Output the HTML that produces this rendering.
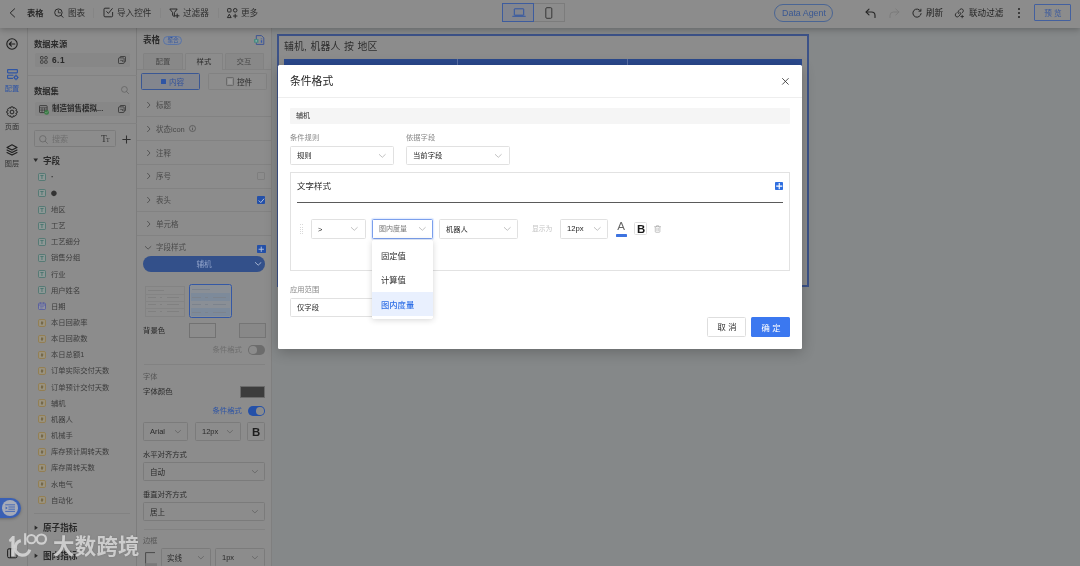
<!DOCTYPE html>
<html lang="zh-CN">
<head>
<meta charset="utf-8">
<title>条件格式</title>
<style>
html,body{margin:0;padding:0;}
body{width:1080px;height:566px;overflow:hidden;position:relative;background:#858889;
 font-family:"Liberation Sans","Noto Sans CJK SC",sans-serif;-webkit-font-smoothing:antialiased;}
#root{position:absolute;left:0;top:0;width:1080px;height:566px;overflow:hidden;}
.t{position:absolute;white-space:nowrap;color:#2b2b2b;will-change:transform;}
svg{display:block;overflow:visible;}
</style>
</head>
<body>
<div id="root">

<div style="position:absolute;left:0px;top:0px;width:1080px;height:566px;background:#858889;"></div>
<div style="position:absolute;left:0px;top:27px;width:27px;height:539px;background:#8c8c8c;"></div>
<div style="position:absolute;left:27px;top:27px;width:109.5px;height:539px;background:#8c8c8c;border-left:0.8px solid #7f7f7f;box-sizing:border-box;"></div>
<div style="position:absolute;left:136px;top:27px;width:135.5px;height:539px;background:#8c8c8c;border-left:0.8px solid #7d7d7d;border-right:0.8px solid #7f7f7f;box-sizing:border-box;"></div>
<svg style="position:absolute;left:6.3px;top:37.5px;" width="12" height="12" viewBox="0 0 12 12" fill="none"><circle cx="6" cy="6" r="5.2" stroke="#1f1f1f" stroke-width="1.1"/><path d="M8.8 6 H3.4 M5.4 3.9 L3.3 6 L5.4 8.1" stroke="#1f1f1f" stroke-width="1.1" stroke-linecap="round" stroke-linejoin="round"/></svg>
<svg style="position:absolute;left:6.5px;top:69px;" width="12" height="11" viewBox="0 0 12 11" fill="none"><rect x="0.6" y="0.6" width="9.8" height="3.2" rx="0.5" stroke="#2f55a4" stroke-width="1.15"/><path d="M6 6.2 H1.1 Q0.6 6.2 0.6 6.7 V8.9 Q0.6 9.4 1.1 9.4 H5.6" stroke="#2f55a4" stroke-width="1.15" stroke-linecap="round"/><circle cx="9" cy="8.4" r="1.6" stroke="#2f55a4" stroke-width="1.15"/><path d="M9 5.9 V6.6 M9 10.2 V10.9 M6.7 8.4 H7.3 M10.7 8.4 H11.3" stroke="#2f55a4" stroke-width="0.9" stroke-linecap="round"/></svg>
<div class="t" id="t0" style="top:84px;font-size:7.2px;line-height:10px;left:-87.7px;width:200px;text-align:center;color:#2f55a4;">配置</div>
<svg style="position:absolute;left:6.2px;top:105.5px;" width="12" height="12" viewBox="0 0 12 12" fill="none"><path d="M4.9 0.9 H7.1 L7.6 2.3 L8.9 1.7 L10.5 3.3 L9.8 4.5 L11.1 5 V7 L9.8 7.5 L10.5 8.7 L8.9 10.3 L7.6 9.7 L7.1 11.1 H4.9 L4.4 9.7 L3.1 10.3 L1.5 8.7 L2.2 7.5 L0.9 7 V5 L2.2 4.5 L1.5 3.3 L3.1 1.7 L4.4 2.3 Z" stroke="#1f1f1f" stroke-width="0.95" stroke-linejoin="round"/><circle cx="6" cy="6" r="1.9" stroke="#1f1f1f" stroke-width="0.95"/></svg>
<div class="t" id="t1" style="top:122px;font-size:7.2px;line-height:10px;left:-87.7px;width:200px;text-align:center;color:#333;">页面</div>
<svg style="position:absolute;left:6.2px;top:143.5px;" width="12" height="12" viewBox="0 0 12 12" fill="none"><path d="M6 0.8 L11 3.4 L6 6 L1 3.4 Z" stroke="#1f1f1f" stroke-width="1.1" stroke-linejoin="round"/><path d="M1 6 L6 8.6 L11 6" stroke="#1f1f1f" stroke-width="1.1" stroke-linejoin="round" stroke-linecap="round"/><path d="M1 8.5 L6 11.1 L11 8.5" stroke="#1f1f1f" stroke-width="1.1" stroke-linejoin="round" stroke-linecap="round"/></svg>
<div class="t" id="t2" style="top:159px;font-size:7.2px;line-height:10px;left:-87.7px;width:200px;text-align:center;color:#333;">图层</div>
<div style="position:absolute;left:-10px;top:497.8px;width:31px;height:20.4px;background:#3a60b4;border-radius:10.2px;box-shadow:0 1px 3px rgba(0,0,0,0.25);"></div>
<div style="position:absolute;left:2px;top:499.8px;width:16.4px;height:16.4px;background:#a6abb8;border-radius:50%;"></div>
<svg style="position:absolute;left:5px;top:503.8px;" width="11" height="9" viewBox="0 0 11 9" fill="none"><path d="M0.6 0.8 H9.6 M3.8 3 H9.6 M3.8 5.2 H9.6 M0.6 7.4 H9.6" stroke="#3a60b4" stroke-width="0.85" stroke-linecap="round"/><path d="M0.6 2.6 L2.6 4.1 L0.6 5.6 Z" fill="#3a60b4"/></svg>
<svg style="position:absolute;left:7px;top:547.5px;" width="11" height="11" viewBox="0 0 11 11" fill="none"><rect x="0.6" y="0.8" width="9.4" height="9" rx="1.4" stroke="#1f1f1f" stroke-width="1"/><path d="M3.6 0.8 V9.8" stroke="#1f1f1f" stroke-width="0.9"/></svg>
<div class="t" id="t3" style="top:38px;font-size:8.3px;line-height:12px;left:34px;color:#2a2a2a;font-weight:700;">数据来源</div>
<div style="position:absolute;left:34.5px;top:52.6px;width:95.5px;height:14.6px;background:#878787;border-radius:1.5px;"></div>
<svg style="position:absolute;left:39.5px;top:56px;" width="8" height="8" viewBox="0 0 8 8" fill="none"><rect x="0.5" y="0.5" width="2.6" height="2.6" rx="0.5" stroke="#333" stroke-width="0.8"/><circle cx="6" cy="1.8" r="1.4" stroke="#333" stroke-width="0.8"/><rect x="0.5" y="4.7" width="2.6" height="2.6" rx="0.5" stroke="#333" stroke-width="0.8"/><rect x="4.6" y="4.7" width="2.6" height="2.6" rx="0.5" stroke="#333" stroke-width="0.8"/></svg>
<div class="t" id="t4" style="top:54px;font-size:8.3px;line-height:12px;left:52px;color:#2a2a2a;font-weight:700;letter-spacing:0.5px;">6.1</div>
<svg style="position:absolute;left:118px;top:56px;" width="8" height="8" viewBox="0 0 8 8" fill="none"><rect x="0.5" y="1.9" width="5.6" height="5.6" rx="0.7" stroke="#333" stroke-width="0.8"/><path d="M2.1 1.9 V1.1 Q2.1 0.5 2.7 0.5 H6.9 Q7.5 0.5 7.5 1.1 V5.3 Q7.5 5.9 6.9 5.9 H6.1" stroke="#333" stroke-width="0.8"/><path d="M2.2 4.3 H4.6 V6" stroke="#333" stroke-width="0.7"/></svg>
<div style="position:absolute;left:27.5px;top:75px;width:109px;height:1px;background:#828282;"></div>
<div class="t" id="t5" style="top:85px;font-size:8.3px;line-height:12px;left:34px;color:#2a2a2a;font-weight:700;">数据集</div>
<svg style="position:absolute;left:120.5px;top:86px;" width="8" height="8" viewBox="0 0 8 8" fill="none"><circle cx="3.4" cy="3.4" r="2.9" stroke="#666" stroke-width="0.85"/><path d="M5.5 5.5 L7.6 7.6" stroke="#666" stroke-width="0.85" stroke-linecap="round"/></svg>
<div style="position:absolute;left:34.5px;top:101.5px;width:95.5px;height:14px;background:#878787;border-radius:1.5px;"></div>
<svg style="position:absolute;left:38.9px;top:104.7px;" width="10" height="10" viewBox="0 0 10 10" fill="none"><rect x="0.5" y="0.6" width="7.6" height="7" rx="0.6" stroke="#333" stroke-width="0.85"/><path d="M0.5 2.8 H8.1 M0.5 5.1 H8.1 M3 2.8 V7.6 M5.6 2.8 V7.6" stroke="#333" stroke-width="0.65"/><circle cx="7.6" cy="7.4" r="2.4" fill="#3a7a45"/><path d="M6.5 7.4 L7.3 8.2 L8.7 6.7" stroke="#8fb596" stroke-width="0.6" stroke-linecap="round" stroke-linejoin="round"/></svg>
<div class="t" id="t6" style="top:103px;font-size:7.5px;line-height:12px;left:52px;color:#2a2a2a;font-weight:700;">制造销售模拟...</div>
<svg style="position:absolute;left:118px;top:104.5px;" width="8" height="8" viewBox="0 0 8 8" fill="none"><rect x="0.5" y="1.9" width="5.6" height="5.6" rx="0.7" stroke="#333" stroke-width="0.8"/><path d="M2.1 1.9 V1.1 Q2.1 0.5 2.7 0.5 H6.9 Q7.5 0.5 7.5 1.1 V5.3 Q7.5 5.9 6.9 5.9 H6.1" stroke="#333" stroke-width="0.8"/><path d="M2.2 4.3 H4.6 V6" stroke="#333" stroke-width="0.7"/></svg>
<div style="position:absolute;left:27.5px;top:123px;width:109px;height:1px;background:#828282;"></div>
<div style="position:absolute;left:34.4px;top:130.4px;width:82px;height:17px;box-sizing:border-box;border:0.9px solid #7c7c7c;border-radius:1.5px;background:#8c8c8c;"></div>
<svg style="position:absolute;left:39px;top:134.5px;" width="9" height="9" viewBox="0 0 9 9" fill="none"><circle cx="3.8" cy="3.8" r="3.2" stroke="#6a6a6a" stroke-width="0.9"/><path d="M6.2 6.2 L8.4 8.4" stroke="#6a6a6a" stroke-width="0.9" stroke-linecap="round"/></svg>
<div class="t" id="t7" style="top:134px;font-size:8.1px;line-height:12px;left:51.6px;color:#6e6e6e;">搜索</div>
<div class="t" id="t8" style="top:133px;font-size:9.5px;line-height:12px;left:101px;color:#333;font-family:&quot;Liberation Serif&quot;,serif;">T</div>
<div class="t" id="t9" style="top:134px;font-size:6px;line-height:12px;left:105.8px;color:#333;font-family:&quot;Liberation Serif&quot;,serif;">T</div>
<svg style="position:absolute;left:122px;top:134.8px;" width="9" height="9" viewBox="0 0 9 9" fill="none"><path d="M4.5 0.4 V8.6 M0.4 4.5 H8.6" stroke="#303030" stroke-width="1.05"/></svg>
<svg style="position:absolute;left:33.3px;top:157.5px;" width="6" height="5" viewBox="0 0 6 5" fill="none"><path d="M0.4 0.6 H5 L2.7 3.9 Z" fill="#2a2a2a"/></svg>
<div class="t" id="t10" style="top:155px;font-size:8.6px;line-height:12px;left:43px;color:#2a2a2a;font-weight:700;">字段</div>
<svg style="position:absolute;left:38px;top:173.2px;" width="8" height="8" viewBox="0 0 8 8" fill="none"><rect x="0.5" y="0.5" width="7" height="7" rx="1" stroke="#43716b" stroke-width="0.75" fill="#8d9795"/><text x="4" y="6.1" font-size="5.6" font-weight="700" text-anchor="middle" font-family="Liberation Sans, sans-serif" fill="#43716b">T</text></svg>
<div class="t" id="t11" style="top:171px;font-size:8.3px;line-height:12px;left:51px;color:#333;font-weight:700;">·</div>
<svg style="position:absolute;left:38px;top:189.35px;" width="8" height="8" viewBox="0 0 8 8" fill="none"><rect x="0.5" y="0.5" width="7" height="7" rx="1" stroke="#43716b" stroke-width="0.75" fill="#8d9795"/><text x="4" y="6.1" font-size="5.6" font-weight="700" text-anchor="middle" font-family="Liberation Sans, sans-serif" fill="#43716b">T</text></svg>
<div class="t" id="t12" style="top:187px;font-size:13px;line-height:12px;left:49.8px;color:#333;">●</div>
<svg style="position:absolute;left:38px;top:205.5px;" width="8" height="8" viewBox="0 0 8 8" fill="none"><rect x="0.5" y="0.5" width="7" height="7" rx="1" stroke="#43716b" stroke-width="0.75" fill="#8d9795"/><text x="4" y="6.1" font-size="5.6" font-weight="700" text-anchor="middle" font-family="Liberation Sans, sans-serif" fill="#43716b">T</text></svg>
<div class="t" id="t13" style="top:204px;font-size:7.3px;line-height:12px;left:51px;color:#3c3c3c;">地区</div>
<svg style="position:absolute;left:38px;top:221.64999999999998px;" width="8" height="8" viewBox="0 0 8 8" fill="none"><rect x="0.5" y="0.5" width="7" height="7" rx="1" stroke="#43716b" stroke-width="0.75" fill="#8d9795"/><text x="4" y="6.1" font-size="5.6" font-weight="700" text-anchor="middle" font-family="Liberation Sans, sans-serif" fill="#43716b">T</text></svg>
<div class="t" id="t14" style="top:220px;font-size:7.3px;line-height:12px;left:51px;color:#3c3c3c;">工艺</div>
<svg style="position:absolute;left:38px;top:237.79999999999998px;" width="8" height="8" viewBox="0 0 8 8" fill="none"><rect x="0.5" y="0.5" width="7" height="7" rx="1" stroke="#43716b" stroke-width="0.75" fill="#8d9795"/><text x="4" y="6.1" font-size="5.6" font-weight="700" text-anchor="middle" font-family="Liberation Sans, sans-serif" fill="#43716b">T</text></svg>
<div class="t" id="t15" style="top:236px;font-size:7.3px;line-height:12px;left:51px;color:#3c3c3c;">工艺细分</div>
<svg style="position:absolute;left:38px;top:253.95px;" width="8" height="8" viewBox="0 0 8 8" fill="none"><rect x="0.5" y="0.5" width="7" height="7" rx="1" stroke="#43716b" stroke-width="0.75" fill="#8d9795"/><text x="4" y="6.1" font-size="5.6" font-weight="700" text-anchor="middle" font-family="Liberation Sans, sans-serif" fill="#43716b">T</text></svg>
<div class="t" id="t16" style="top:252px;font-size:7.3px;line-height:12px;left:51px;color:#3c3c3c;">销售分组</div>
<svg style="position:absolute;left:38px;top:270.09999999999997px;" width="8" height="8" viewBox="0 0 8 8" fill="none"><rect x="0.5" y="0.5" width="7" height="7" rx="1" stroke="#43716b" stroke-width="0.75" fill="#8d9795"/><text x="4" y="6.1" font-size="5.6" font-weight="700" text-anchor="middle" font-family="Liberation Sans, sans-serif" fill="#43716b">T</text></svg>
<div class="t" id="t17" style="top:269px;font-size:7.3px;line-height:12px;left:51px;color:#3c3c3c;">行业</div>
<svg style="position:absolute;left:38px;top:286.25px;" width="8" height="8" viewBox="0 0 8 8" fill="none"><rect x="0.5" y="0.5" width="7" height="7" rx="1" stroke="#43716b" stroke-width="0.75" fill="#8d9795"/><text x="4" y="6.1" font-size="5.6" font-weight="700" text-anchor="middle" font-family="Liberation Sans, sans-serif" fill="#43716b">T</text></svg>
<div class="t" id="t18" style="top:285px;font-size:7.3px;line-height:12px;left:51px;color:#3c3c3c;">用户姓名</div>
<svg style="position:absolute;left:38px;top:302.4px;" width="8" height="8" viewBox="0 0 8 8" fill="none"><rect x="0.5" y="1.1" width="7" height="6.4" rx="1" stroke="#4d55a0" stroke-width="0.75" fill="#9092a0"/><path d="M0.5 3 H7.5 M2.4 0.3 V1.8 M5.6 0.3 V1.8" stroke="#4d55a0" stroke-width="0.7"/><path d="M2.2 4.6 H5.8 M2.2 6 H4.6" stroke="#4d55a0" stroke-width="0.5"/></svg>
<div class="t" id="t19" style="top:301px;font-size:7.3px;line-height:12px;left:51px;color:#3c3c3c;">日期</div>
<svg style="position:absolute;left:38px;top:318.54999999999995px;" width="8" height="8" viewBox="0 0 8 8" fill="none"><rect x="0.6" y="0.6" width="6.8" height="6.8" rx="1" stroke="#94783f" stroke-width="0.8" fill="#9b9584"/><text x="4" y="5.7" font-size="4.8" font-weight="700" text-anchor="middle" font-family="Liberation Sans, sans-serif" fill="#665630">#</text></svg>
<div class="t" id="t20" style="top:317px;font-size:7.3px;line-height:12px;left:51px;color:#3c3c3c;">本日回款率</div>
<svg style="position:absolute;left:38px;top:334.7px;" width="8" height="8" viewBox="0 0 8 8" fill="none"><rect x="0.6" y="0.6" width="6.8" height="6.8" rx="1" stroke="#94783f" stroke-width="0.8" fill="#9b9584"/><text x="4" y="5.7" font-size="4.8" font-weight="700" text-anchor="middle" font-family="Liberation Sans, sans-serif" fill="#665630">#</text></svg>
<div class="t" id="t21" style="top:333px;font-size:7.3px;line-height:12px;left:51px;color:#3c3c3c;">本日回款数</div>
<svg style="position:absolute;left:38px;top:350.84999999999997px;" width="8" height="8" viewBox="0 0 8 8" fill="none"><rect x="0.6" y="0.6" width="6.8" height="6.8" rx="1" stroke="#94783f" stroke-width="0.8" fill="#9b9584"/><text x="4" y="5.7" font-size="4.8" font-weight="700" text-anchor="middle" font-family="Liberation Sans, sans-serif" fill="#665630">#</text></svg>
<div class="t" id="t22" style="top:349px;font-size:7.3px;line-height:12px;left:51px;color:#3c3c3c;">本日总额1</div>
<svg style="position:absolute;left:38px;top:367.0px;" width="8" height="8" viewBox="0 0 8 8" fill="none"><rect x="0.6" y="0.6" width="6.8" height="6.8" rx="1" stroke="#94783f" stroke-width="0.8" fill="#9b9584"/><text x="4" y="5.7" font-size="4.8" font-weight="700" text-anchor="middle" font-family="Liberation Sans, sans-serif" fill="#665630">#</text></svg>
<div class="t" id="t23" style="top:365px;font-size:7.3px;line-height:12px;left:51px;color:#3c3c3c;">订单实际交付天数</div>
<svg style="position:absolute;left:38px;top:383.15px;" width="8" height="8" viewBox="0 0 8 8" fill="none"><rect x="0.6" y="0.6" width="6.8" height="6.8" rx="1" stroke="#94783f" stroke-width="0.8" fill="#9b9584"/><text x="4" y="5.7" font-size="4.8" font-weight="700" text-anchor="middle" font-family="Liberation Sans, sans-serif" fill="#665630">#</text></svg>
<div class="t" id="t24" style="top:382px;font-size:7.3px;line-height:12px;left:51px;color:#3c3c3c;">订单预计交付天数</div>
<svg style="position:absolute;left:38px;top:399.29999999999995px;" width="8" height="8" viewBox="0 0 8 8" fill="none"><rect x="0.6" y="0.6" width="6.8" height="6.8" rx="1" stroke="#94783f" stroke-width="0.8" fill="#9b9584"/><text x="4" y="5.7" font-size="4.8" font-weight="700" text-anchor="middle" font-family="Liberation Sans, sans-serif" fill="#665630">#</text></svg>
<div class="t" id="t25" style="top:398px;font-size:7.3px;line-height:12px;left:51px;color:#3c3c3c;">辅机</div>
<svg style="position:absolute;left:38px;top:415.44999999999993px;" width="8" height="8" viewBox="0 0 8 8" fill="none"><rect x="0.6" y="0.6" width="6.8" height="6.8" rx="1" stroke="#94783f" stroke-width="0.8" fill="#9b9584"/><text x="4" y="5.7" font-size="4.8" font-weight="700" text-anchor="middle" font-family="Liberation Sans, sans-serif" fill="#665630">#</text></svg>
<div class="t" id="t26" style="top:414px;font-size:7.3px;line-height:12px;left:51px;color:#3c3c3c;">机器人</div>
<svg style="position:absolute;left:38px;top:431.59999999999997px;" width="8" height="8" viewBox="0 0 8 8" fill="none"><rect x="0.6" y="0.6" width="6.8" height="6.8" rx="1" stroke="#94783f" stroke-width="0.8" fill="#9b9584"/><text x="4" y="5.7" font-size="4.8" font-weight="700" text-anchor="middle" font-family="Liberation Sans, sans-serif" fill="#665630">#</text></svg>
<div class="t" id="t27" style="top:430px;font-size:7.3px;line-height:12px;left:51px;color:#3c3c3c;">机械手</div>
<svg style="position:absolute;left:38px;top:447.74999999999994px;" width="8" height="8" viewBox="0 0 8 8" fill="none"><rect x="0.6" y="0.6" width="6.8" height="6.8" rx="1" stroke="#94783f" stroke-width="0.8" fill="#9b9584"/><text x="4" y="5.7" font-size="4.8" font-weight="700" text-anchor="middle" font-family="Liberation Sans, sans-serif" fill="#665630">#</text></svg>
<div class="t" id="t28" style="top:446px;font-size:7.3px;line-height:12px;left:51px;color:#3c3c3c;">库存预计周转天数</div>
<svg style="position:absolute;left:38px;top:463.9px;" width="8" height="8" viewBox="0 0 8 8" fill="none"><rect x="0.6" y="0.6" width="6.8" height="6.8" rx="1" stroke="#94783f" stroke-width="0.8" fill="#9b9584"/><text x="4" y="5.7" font-size="4.8" font-weight="700" text-anchor="middle" font-family="Liberation Sans, sans-serif" fill="#665630">#</text></svg>
<div class="t" id="t29" style="top:462px;font-size:7.3px;line-height:12px;left:51px;color:#3c3c3c;">库存周转天数</div>
<svg style="position:absolute;left:38px;top:480.04999999999995px;" width="8" height="8" viewBox="0 0 8 8" fill="none"><rect x="0.6" y="0.6" width="6.8" height="6.8" rx="1" stroke="#94783f" stroke-width="0.8" fill="#9b9584"/><text x="4" y="5.7" font-size="4.8" font-weight="700" text-anchor="middle" font-family="Liberation Sans, sans-serif" fill="#665630">#</text></svg>
<div class="t" id="t30" style="top:479px;font-size:7.3px;line-height:12px;left:51px;color:#3c3c3c;">水电气</div>
<svg style="position:absolute;left:38px;top:496.2px;" width="8" height="8" viewBox="0 0 8 8" fill="none"><rect x="0.6" y="0.6" width="6.8" height="6.8" rx="1" stroke="#94783f" stroke-width="0.8" fill="#9b9584"/><text x="4" y="5.7" font-size="4.8" font-weight="700" text-anchor="middle" font-family="Liberation Sans, sans-serif" fill="#665630">#</text></svg>
<div class="t" id="t31" style="top:495px;font-size:7.3px;line-height:12px;left:51px;color:#3c3c3c;">自动化</div>
<div style="position:absolute;left:34px;top:513px;width:96px;height:1px;background:#828282;"></div>
<svg style="position:absolute;left:33.8px;top:524.8px;" width="5" height="6" viewBox="0 0 5 6" fill="none"><path d="M0.6 0.4 V5 L3.9 2.7 Z" fill="#2a2a2a"/></svg>
<div class="t" id="t32" style="top:522px;font-size:8.6px;line-height:12px;left:43px;color:#2a2a2a;font-weight:700;">原子指标</div>
<svg style="position:absolute;left:33.8px;top:552.8px;" width="5" height="6" viewBox="0 0 5 6" fill="none"><path d="M0.6 0.4 V5 L3.9 2.7 Z" fill="#2a2a2a"/></svg>
<div class="t" id="t33" style="top:550px;font-size:8.6px;line-height:12px;left:43px;color:#2a2a2a;font-weight:700;">图内指标</div>
<div class="t" id="t34" style="top:34px;font-size:8.6px;line-height:12px;left:143.4px;color:#2a2a2a;font-weight:700;">表格</div>
<div style="position:absolute;left:163px;top:36px;width:19.2px;height:9.2px;box-sizing:border-box;border:0.7px solid #5a74a6;border-radius:4.6px;background:#858b98;"></div>
<div class="t" id="t35" style="top:36px;font-size:5.6px;line-height:8px;left:72.6px;width:200px;text-align:center;color:#34569c;">聚合</div>
<svg style="position:absolute;left:254px;top:35px;" width="11" height="11" viewBox="0 0 11 11" fill="none"><path d="M2.3 4 V0.6 H7.5 L9.8 2.9 V9.4 H2.3 V7.7" stroke="#3a5296" stroke-width="0.95" stroke-linejoin="round"/><rect x="0" y="4" width="4.5" height="3.8" rx="0.5" fill="#4a8a82"/><rect x="1.5" y="5.1" width="1.5" height="1.6" fill="#86b3ab"/><path d="M7.5 3.4 V4.3 M7.5 5.2 V7.7" stroke="#3558a8" stroke-width="1.4"/></svg>
<div style="position:absolute;left:137px;top:69px;width:134px;height:1px;background:#828282;"></div>
<div style="position:absolute;left:143.3px;top:52.6px;width:39.6px;height:16.6px;box-sizing:border-box;border:0.8px solid #828282;border-bottom:none;border-radius:1.5px 1.5px 0 0;background:#888888;"></div>
<div class="t" id="t36" style="top:57px;font-size:7.4px;line-height:10px;left:63.099999999999994px;width:200px;text-align:center;color:#4a4a4a;">配置</div>
<div style="position:absolute;left:184.5px;top:52.6px;width:38.6px;height:17.3px;box-sizing:border-box;border:0.8px solid #828282;border-bottom:none;border-radius:1.5px 1.5px 0 0;background:#8c8c8c;"></div>
<div class="t" id="t37" style="top:57px;font-size:7.4px;line-height:10px;left:103.80000000000001px;width:200px;text-align:center;color:#2a2a2a;">样式</div>
<div style="position:absolute;left:225px;top:52.6px;width:38.8px;height:16.6px;box-sizing:border-box;border:0.8px solid #828282;border-bottom:none;border-radius:1.5px 1.5px 0 0;background:#888888;"></div>
<div class="t" id="t38" style="top:57px;font-size:7.4px;line-height:10px;left:144.4px;width:200px;text-align:center;color:#4a4a4a;">交互</div>
<div style="position:absolute;left:141.3px;top:73.2px;width:58.5px;height:17px;box-sizing:border-box;border:1px solid #3a5794;border-radius:1.5px;background:#83868e;"></div>
<div style="position:absolute;left:161px;top:79.3px;width:4.6px;height:4.6px;background:#2f55a4;border-radius:0.6px;"></div>
<div class="t" id="t39" style="top:77px;font-size:7.6px;line-height:12px;left:169px;color:#34539a;">内容</div>
<div style="position:absolute;left:208px;top:73.2px;width:59px;height:17px;box-sizing:border-box;border:0.8px solid #828282;border-radius:1.5px;background:#8c8c8c;"></div>
<div style="position:absolute;left:226px;top:77.4px;width:8px;height:8.2px;box-sizing:border-box;border:0.8px solid #6a6a6a;border-radius:1.2px;background:#8c8c8c;"></div>
<div style="position:absolute;left:227.7px;top:79.1px;width:4.6px;height:4.8px;background:#9a9a9a;border-radius:0.5px;"></div>
<div class="t" id="t40" style="top:77px;font-size:7.6px;line-height:12px;left:236.6px;color:#2a2a2a;">控件</div>
<svg style="position:absolute;left:146.5px;top:102px;" width="4" height="6" viewBox="0 0 4 6" fill="none"><path d="M0.5 0.3 L3 3 L0.5 5.7" stroke="#454545" stroke-width="0.75" stroke-linecap="round" stroke-linejoin="round"/></svg>
<div class="t" id="t41" style="top:100px;font-size:7.5px;line-height:12px;left:156.3px;color:#4a4a4a;">标题</div>
<div style="position:absolute;left:137px;top:116px;width:134px;height:1px;background:#828282;"></div>
<svg style="position:absolute;left:146.5px;top:125.80000000000001px;" width="4" height="6" viewBox="0 0 4 6" fill="none"><path d="M0.5 0.3 L3 3 L0.5 5.7" stroke="#454545" stroke-width="0.75" stroke-linecap="round" stroke-linejoin="round"/></svg>
<div class="t" id="t42" style="top:124px;font-size:7.5px;line-height:12px;left:156.3px;color:#4a4a4a;">状态icon</div>
<div style="position:absolute;left:137px;top:140px;width:134px;height:1px;background:#828282;"></div>
<svg style="position:absolute;left:146.5px;top:149.6px;" width="4" height="6" viewBox="0 0 4 6" fill="none"><path d="M0.5 0.3 L3 3 L0.5 5.7" stroke="#454545" stroke-width="0.75" stroke-linecap="round" stroke-linejoin="round"/></svg>
<div class="t" id="t43" style="top:148px;font-size:7.5px;line-height:12px;left:156.3px;color:#4a4a4a;">注释</div>
<div style="position:absolute;left:137px;top:164px;width:134px;height:1px;background:#828282;"></div>
<svg style="position:absolute;left:146.5px;top:173.4px;" width="4" height="6" viewBox="0 0 4 6" fill="none"><path d="M0.5 0.3 L3 3 L0.5 5.7" stroke="#454545" stroke-width="0.75" stroke-linecap="round" stroke-linejoin="round"/></svg>
<div class="t" id="t44" style="top:171px;font-size:7.5px;line-height:12px;left:156.3px;color:#4a4a4a;">序号</div>
<div style="position:absolute;left:137px;top:188px;width:134px;height:1px;background:#828282;"></div>
<svg style="position:absolute;left:146.5px;top:197.2px;" width="4" height="6" viewBox="0 0 4 6" fill="none"><path d="M0.5 0.3 L3 3 L0.5 5.7" stroke="#454545" stroke-width="0.75" stroke-linecap="round" stroke-linejoin="round"/></svg>
<div class="t" id="t45" style="top:195px;font-size:7.5px;line-height:12px;left:156.3px;color:#4a4a4a;">表头</div>
<div style="position:absolute;left:137px;top:211px;width:134px;height:1px;background:#828282;"></div>
<svg style="position:absolute;left:146.5px;top:221px;" width="4" height="6" viewBox="0 0 4 6" fill="none"><path d="M0.5 0.3 L3 3 L0.5 5.7" stroke="#454545" stroke-width="0.75" stroke-linecap="round" stroke-linejoin="round"/></svg>
<div class="t" id="t46" style="top:219px;font-size:7.5px;line-height:12px;left:156.3px;color:#4a4a4a;">单元格</div>
<div style="position:absolute;left:137px;top:235px;width:134px;height:1px;background:#828282;"></div>
<svg style="position:absolute;left:189px;top:125.3px;" width="7" height="7" viewBox="0 0 7 7" fill="none"><circle cx="3.5" cy="3.5" r="3.05" stroke="#4a4a4a" stroke-width="0.65"/><path d="M3.5 3.1 V5.2" stroke="#4a4a4a" stroke-width="0.75"/><circle cx="3.5" cy="2" r="0.45" fill="#4a4a4a"/></svg>
<div style="position:absolute;left:256.7px;top:172.3px;width:8.2px;height:8.2px;box-sizing:border-box;border:0.8px solid #7e7e7e;border-radius:1px;background:#8c8c8c;"></div>
<div style="position:absolute;left:256.7px;top:196.1px;width:8.4px;height:8.4px;background:#2450a8;border-radius:1px;"></div>
<svg style="position:absolute;left:257.6px;top:197.6px;" width="7" height="6" viewBox="0 0 7 6" fill="none"><path d="M1 2.8 L2.8 4.6 L5.8 1" stroke="#b9c4dc" stroke-width="0.95" stroke-linecap="round" stroke-linejoin="round"/></svg>
<svg style="position:absolute;left:144.70000000000002px;top:245.74999999999997px;" width="6.2" height="4.1" viewBox="0 0 6.2 4.1" fill="none"><path d="M0.3 0.5 L3.1 3.1 L5.9 0.5" stroke="#454545" stroke-width="0.75" stroke-linecap="round" stroke-linejoin="round"/></svg>
<div class="t" id="t47" style="top:242px;font-size:7.5px;line-height:12px;left:156.3px;color:#4a4a4a;">字段样式</div>
<div style="position:absolute;left:257px;top:244.5px;width:8.5px;height:8.5px;background:#2450a8;border-radius:0.8px;"></div>
<svg style="position:absolute;left:257px;top:244.5px;" width="8.5" height="8.5" viewBox="0 0 8.5 8.5" fill="none"><path d="M4.25 1.6 V6.9 M1.6 4.25 H6.9" stroke="#b9c4dc" stroke-width="0.9"/></svg>
<div style="position:absolute;left:143.3px;top:256px;width:122.2px;height:16px;background:#33508a;border-radius:8px;"></div>
<div class="t" id="t48" style="top:260px;font-size:7.6px;line-height:10px;left:104.4px;width:200px;text-align:center;color:#93a4cb;">辅机</div>
<svg style="position:absolute;left:255.10000000000002px;top:262.29999999999995px;" width="6.4" height="4.2" viewBox="0 0 6.4 4.2" fill="none"><path d="M0.3 0.5 L3.2 3.2 L6.1000000000000005 0.5" stroke="#b9c4dc" stroke-width="0.85" stroke-linecap="round" stroke-linejoin="round"/></svg>
<div style="position:absolute;left:144.6px;top:285.6px;width:40.2px;height:31.2px;box-sizing:border-box;border:0.6px solid #838383;background:#8c8c8c;"></div>
<div style="position:absolute;left:147.6px;top:290px;width:16.740000000000002px;height:1px;background:#808080;"></div>
<div style="position:absolute;left:145.2px;top:294px;width:39.0px;height:1px;background:#848484;"></div>
<div style="position:absolute;left:147.6px;top:297px;width:8.184000000000001px;height:1px;background:#808080;"></div>
<div style="position:absolute;left:159.504px;top:297px;width:2.9760000000000004px;height:1px;background:#808080;"></div>
<div style="position:absolute;left:166.944px;top:297px;width:12.276000000000002px;height:1px;background:#808080;"></div>
<div style="position:absolute;left:145.2px;top:301px;width:39.0px;height:1px;background:#848484;"></div>
<div style="position:absolute;left:147.6px;top:304px;width:8.184000000000001px;height:1px;background:#808080;"></div>
<div style="position:absolute;left:159.504px;top:304px;width:2.9760000000000004px;height:1px;background:#808080;"></div>
<div style="position:absolute;left:166.944px;top:304px;width:12.276000000000002px;height:1px;background:#808080;"></div>
<div style="position:absolute;left:145.2px;top:308px;width:39.0px;height:1px;background:#848484;"></div>
<div style="position:absolute;left:147.6px;top:311px;width:8.184000000000001px;height:1px;background:#808080;"></div>
<div style="position:absolute;left:159.504px;top:311px;width:2.9760000000000004px;height:1px;background:#808080;"></div>
<div style="position:absolute;left:166.944px;top:311px;width:12.276000000000002px;height:1px;background:#808080;"></div>
<div style="position:absolute;left:189px;top:284px;width:42.8px;height:33.6px;box-sizing:border-box;border:1px solid #3458a5;border-radius:2.5px;background:#8a8f96;"></div>
<div style="position:absolute;left:192.0px;top:289px;width:17.91px;height:1px;background:#7c838d;"></div>
<div style="position:absolute;left:190.5px;top:293.3px;width:39.8px;height:7.5px;background:#7d8a9a;"></div>
<div style="position:absolute;left:192.0px;top:297px;width:8.756px;height:1px;background:#7c838d;"></div>
<div style="position:absolute;left:204.736px;top:297px;width:3.1839999999999997px;height:1px;background:#7c838d;"></div>
<div style="position:absolute;left:212.696px;top:297px;width:13.134px;height:1px;background:#7c838d;"></div>
<div style="position:absolute;left:192.0px;top:304px;width:8.756px;height:1px;background:#7c838d;"></div>
<div style="position:absolute;left:204.736px;top:304px;width:3.1839999999999997px;height:1px;background:#7c838d;"></div>
<div style="position:absolute;left:212.696px;top:304px;width:13.134px;height:1px;background:#7c838d;"></div>
<div style="position:absolute;left:190.5px;top:308.3px;width:39.8px;height:7.5px;background:#7d8a9a;"></div>
<div style="position:absolute;left:192.0px;top:312px;width:8.756px;height:1px;background:#7c838d;"></div>
<div style="position:absolute;left:204.736px;top:312px;width:3.1839999999999997px;height:1px;background:#7c838d;"></div>
<div style="position:absolute;left:212.696px;top:312px;width:13.134px;height:1px;background:#7c838d;"></div>
<div class="t" id="t49" style="top:325px;font-size:7.4px;line-height:12px;left:143.4px;color:#2a2a2a;">背景色</div>
<div style="position:absolute;left:189px;top:323px;width:27px;height:14.6px;box-sizing:border-box;border:0.8px solid #727272;background:#8c8c8c;"></div>
<div style="position:absolute;left:239px;top:323px;width:27px;height:14.6px;box-sizing:border-box;border:0.8px solid #757575;background:#888888;"></div>
<div class="t" id="t50" style="top:345px;font-size:7.4px;line-height:10px;left:42.30000000000001px;width:200px;text-align:right;color:#6e6e6e;">条件格式</div>
<div style="position:absolute;left:248.3px;top:345.2px;width:16.8px;height:9.8px;background:#6c6c6c;border-radius:4.9px;"></div>
<div style="position:absolute;left:249.4px;top:346.3px;width:7.6px;height:7.6px;background:#8b8b8b;border-radius:50%;"></div>
<div style="position:absolute;left:143.5px;top:364px;width:121.5px;height:1px;background:#828282;"></div>
<div class="t" id="t51" style="top:371px;font-size:7.2px;line-height:12px;left:143.4px;color:#555;">字体</div>
<div class="t" id="t52" style="top:386px;font-size:7.4px;line-height:12px;left:143.4px;color:#2a2a2a;">字体颜色</div>
<div style="position:absolute;left:240px;top:385.6px;width:25.2px;height:12px;box-sizing:border-box;border:0.8px solid #6a6a6a;background:#3c3c3c;"></div>
<div class="t" id="t53" style="top:406px;font-size:7.4px;line-height:10px;left:42.30000000000001px;width:200px;text-align:right;color:#2f55a4;">条件格式</div>
<div style="position:absolute;left:248.3px;top:406px;width:16.8px;height:9.8px;background:#2450a8;border-radius:4.9px;"></div>
<div style="position:absolute;left:256.4px;top:407.1px;width:7.6px;height:7.6px;background:#8c8c8c;border-radius:50%;"></div>
<div style="position:absolute;left:143.3px;top:422.4px;width:45.2px;height:18.8px;box-sizing:border-box;border:0.8px solid #7b7b7b;border-radius:1.5px;background:#8c8c8c;"></div>
<div class="t" id="t54" style="top:426px;font-size:7.5px;line-height:12px;left:150.3px;color:#2a2a2a;">Arial</div>
<svg style="position:absolute;left:175.1px;top:430.24999999999994px;" width="5.8" height="3.9" viewBox="0 0 5.8 3.9" fill="none"><path d="M0.3 0.5 L2.9 2.9 L5.5 0.5" stroke="#5c5c5c" stroke-width="0.7" stroke-linecap="round" stroke-linejoin="round"/></svg>
<div style="position:absolute;left:195px;top:422.4px;width:45.5px;height:18.8px;box-sizing:border-box;border:0.8px solid #7b7b7b;border-radius:1.5px;background:#8c8c8c;"></div>
<div class="t" id="t55" style="top:426px;font-size:7.5px;line-height:12px;left:202px;color:#2a2a2a;">12px</div>
<svg style="position:absolute;left:227.1px;top:430.24999999999994px;" width="5.8" height="3.9" viewBox="0 0 5.8 3.9" fill="none"><path d="M0.3 0.5 L2.9 2.9 L5.5 0.5" stroke="#5c5c5c" stroke-width="0.7" stroke-linecap="round" stroke-linejoin="round"/></svg>
<div style="position:absolute;left:247px;top:422.4px;width:18.2px;height:18.8px;box-sizing:border-box;border:0.8px solid #7b7b7b;border-radius:1.5px;background:#8c8c8c;"></div>
<div class="t" id="t56" style="top:426px;font-size:11.4px;line-height:12px;left:156.2px;width:200px;text-align:center;color:#1e1e1e;font-weight:700;">B</div>
<div class="t" id="t57" style="top:449px;font-size:7.3px;line-height:12px;left:143.4px;color:#2a2a2a;">水平对齐方式</div>
<div style="position:absolute;left:143.3px;top:462.3px;width:121.8px;height:19px;box-sizing:border-box;border:0.8px solid #7b7b7b;border-radius:1.5px;background:#8c8c8c;"></div>
<div class="t" id="t58" style="top:467px;font-size:7.5px;line-height:12px;left:150.3px;color:#2a2a2a;">自动</div>
<svg style="position:absolute;left:251.70000000000002px;top:470.25px;" width="5.8" height="3.9" viewBox="0 0 5.8 3.9" fill="none"><path d="M0.3 0.5 L2.9 2.9 L5.5 0.5" stroke="#5c5c5c" stroke-width="0.7" stroke-linecap="round" stroke-linejoin="round"/></svg>
<div class="t" id="t59" style="top:489px;font-size:7.3px;line-height:12px;left:143.4px;color:#2a2a2a;">垂直对齐方式</div>
<div style="position:absolute;left:143.3px;top:502.4px;width:121.8px;height:19px;box-sizing:border-box;border:0.8px solid #7b7b7b;border-radius:1.5px;background:#8c8c8c;"></div>
<div class="t" id="t60" style="top:507px;font-size:7.5px;line-height:12px;left:150.3px;color:#2a2a2a;">居上</div>
<svg style="position:absolute;left:251.70000000000002px;top:510.35px;" width="5.8" height="3.9" viewBox="0 0 5.8 3.9" fill="none"><path d="M0.3 0.5 L2.9 2.9 L5.5 0.5" stroke="#5c5c5c" stroke-width="0.7" stroke-linecap="round" stroke-linejoin="round"/></svg>
<div style="position:absolute;left:143.5px;top:529px;width:121.5px;height:1px;background:#828282;"></div>
<div class="t" id="t61" style="top:535px;font-size:7.2px;line-height:12px;left:143.4px;color:#555;">边框</div>
<svg style="position:absolute;left:144.6px;top:551.8px;" width="12" height="14" viewBox="0 0 12 14" fill="none"><path d="M0.6 14 V0.6 H10" stroke="#3a3a3a" stroke-width="0.8"/><rect x="0.2" y="11.2" width="11.8" height="3" fill="#7a7a7a"/></svg>
<div style="position:absolute;left:160.7px;top:548.4px;width:50.4px;height:19px;box-sizing:border-box;border:0.8px solid #7b7b7b;border-radius:1.5px;background:#8c8c8c;"></div>
<div class="t" id="t62" style="top:553px;font-size:7.5px;line-height:12px;left:167.0px;color:#2a2a2a;">实线</div>
<svg style="position:absolute;left:197.7px;top:556.35px;" width="5.8" height="3.9" viewBox="0 0 5.8 3.9" fill="none"><path d="M0.3 0.5 L2.9 2.9 L5.5 0.5" stroke="#5c5c5c" stroke-width="0.7" stroke-linecap="round" stroke-linejoin="round"/></svg>
<div style="position:absolute;left:215px;top:548.4px;width:50.2px;height:19px;box-sizing:border-box;border:0.8px solid #7b7b7b;border-radius:1.5px;background:#8c8c8c;"></div>
<div class="t" id="t63" style="top:552px;font-size:7.5px;line-height:12px;left:222px;color:#2a2a2a;">1px</div>
<svg style="position:absolute;left:251.79999999999998px;top:556.35px;" width="5.8" height="3.9" viewBox="0 0 5.8 3.9" fill="none"><path d="M0.3 0.5 L2.9 2.9 L5.5 0.5" stroke="#5c5c5c" stroke-width="0.7" stroke-linecap="round" stroke-linejoin="round"/></svg>
<div style="position:absolute;left:276.9px;top:33.8px;width:532.1px;height:253.4px;box-sizing:border-box;border:2px solid #3c5288;background:#8c8c8c;"></div>
<div class="t" id="t64" style="top:41px;font-size:9.9px;line-height:12px;left:283.8px;color:#2e2e2e;letter-spacing:0.15px;word-spacing:0.6px;">辅机, 机器人 按 地区</div>
<div style="position:absolute;left:284px;top:59px;width:517.6px;height:8px;background:#2b498d;"></div>
<div style="position:absolute;left:457px;top:58.8px;width:1px;height:8px;background:#5a70a5;"></div>
<div style="position:absolute;left:627px;top:58.8px;width:1px;height:8px;background:#5a70a5;"></div>
<div style="position:absolute;left:0px;top:0px;width:1080px;height:27.5px;background:#8c8c8c;box-shadow:0 1.5px 6px rgba(0,0,0,0.24);"></div>
<svg style="position:absolute;left:8.5px;top:8.3px;" width="7" height="10" viewBox="0 0 7 10" fill="none"><path d="M5.6 0.8 L1.2 4.9 L5.6 9" stroke="#262626" stroke-width="1" stroke-linecap="round" stroke-linejoin="round"/></svg>
<div class="t" id="t65" style="top:7px;font-size:8.3px;line-height:12px;left:27.3px;color:#262626;font-weight:700;">表格</div>
<svg style="position:absolute;left:53.5px;top:7.5px;" width="10" height="10" viewBox="0 0 10 10" fill="none"><circle cx="4.4" cy="4.6" r="3.7" stroke="#262626" stroke-width="0.95"/><path d="M4.4 2.2 V4.8 H6.9" stroke="#262626" stroke-width="0.8"/><path d="M7 7.3 L9 9.3" stroke="#262626" stroke-width="1" stroke-linecap="round"/></svg>
<div class="t" id="t66" style="top:7px;font-size:8.6px;line-height:12px;left:67.6px;color:#2e2e2e;">图表</div>
<div style="position:absolute;left:93px;top:8px;width:1px;height:10px;background:#858585;"></div>
<svg style="position:absolute;left:103px;top:7.3px;" width="11" height="11" viewBox="0 0 11 11" fill="none"><path d="M6.2 1.2 H2 Q1 1.2 1 2.2 V8.8 Q1 9.8 2 9.8 H8.6 Q9.6 9.8 9.6 8.8 V5.4" stroke="#262626" stroke-width="0.95" stroke-linecap="round"/><path d="M3.7 4.6 L5.4 6.4 L9.3 1.6" stroke="#262626" stroke-width="0.95" stroke-linecap="round" stroke-linejoin="round"/></svg>
<div class="t" id="t67" style="top:7px;font-size:8.6px;line-height:12px;left:117px;color:#2e2e2e;">导入控件</div>
<div style="position:absolute;left:160px;top:8px;width:1px;height:10px;background:#858585;"></div>
<svg style="position:absolute;left:169px;top:7.5px;" width="11" height="11" viewBox="0 0 11 11" fill="none"><path d="M0.8 1 H8.2 L5.4 4.6 V8.6 L3.6 7.4 V4.6 Z" stroke="#262626" stroke-width="0.95" stroke-linejoin="round"/><path d="M8.2 6 V9.6 M6.4 7.8 H10" stroke="#262626" stroke-width="0.95" stroke-linecap="round"/></svg>
<div class="t" id="t68" style="top:7px;font-size:8.6px;line-height:12px;left:183.2px;color:#2e2e2e;">过滤器</div>
<div style="position:absolute;left:218px;top:8px;width:1px;height:10px;background:#858585;"></div>
<svg style="position:absolute;left:227px;top:7.5px;" width="11" height="11" viewBox="0 0 11 11" fill="none"><rect x="0.6" y="0.6" width="3.4" height="3.4" rx="0.6" stroke="#262626" stroke-width="0.95"/><circle cx="8.2" cy="2.3" r="1.8" stroke="#262626" stroke-width="0.95"/><path d="M2.3 6.2 L4.2 9.6 H0.4 Z" stroke="#262626" stroke-width="0.95" stroke-linejoin="round"/><path d="M8.2 6.2 V9.8 M6.4 8 H10" stroke="#262626" stroke-width="0.95" stroke-linecap="round"/></svg>
<div class="t" id="t69" style="top:7px;font-size:8.6px;line-height:12px;left:241.3px;color:#2e2e2e;">更多</div>
<div style="position:absolute;left:502px;top:3.2px;width:32px;height:18.6px;box-sizing:border-box;border:1px solid #3d5c9e;background:#83868f;"></div>
<div style="position:absolute;left:533.5px;top:3.2px;width:31.5px;height:18.6px;box-sizing:border-box;border:0.9px solid #7c7c7c;border-left:none;background:#8c8c8c;"></div>
<svg style="position:absolute;left:511.5px;top:8px;" width="14" height="10" viewBox="0 0 14 10" fill="none"><rect x="2.3" y="0.8" width="9.4" height="6.4" rx="0.4" stroke="#2f55a4" stroke-width="1"/><path d="M0.8 8.2 H13.2" stroke="#2f55a4" stroke-width="1.1" stroke-linecap="round"/></svg>
<svg style="position:absolute;left:544.8px;top:6.5px;" width="8" height="13" viewBox="0 0 8 13" fill="none"><rect x="0.8" y="0.7" width="6" height="10.6" rx="1.1" stroke="#333" stroke-width="0.95"/></svg>
<div style="position:absolute;left:774.2px;top:3.6px;width:58.7px;height:18.6px;box-sizing:border-box;border:0.9px solid #4a6594;border-radius:9.3px;background:#8c8c8c;"></div>
<div class="t" id="t70" style="top:7px;font-size:8.9px;line-height:12px;left:703.5px;width:200px;text-align:center;color:#3a5892;">Data Agent</div>
<svg style="position:absolute;left:864.5px;top:7.5px;" width="12" height="11" viewBox="0 0 12 11" fill="none"><path d="M4 1.2 L1.1 4 L4 6.8" stroke="#262626" stroke-width="1.15" stroke-linecap="round" stroke-linejoin="round"/><path d="M1.3 4 H6.4 Q10 4 10 7.4 V9.4" stroke="#262626" stroke-width="1.15" stroke-linecap="round"/></svg>
<svg style="position:absolute;left:887.5px;top:7.5px;" width="12" height="11" viewBox="0 0 12 11" fill="none"><path d="M7.8 1 L11 4 L7.8 7" stroke="#7b7b7b" stroke-width="0.95" stroke-linecap="round" stroke-linejoin="round"/><path d="M10.8 4 H5.6 Q2 4 2 7.4 V9.6" stroke="#7b7b7b" stroke-width="0.95" stroke-linecap="round"/></svg>
<svg style="position:absolute;left:911.5px;top:8px;" width="10" height="10" viewBox="0 0 10 10" fill="none"><path d="M8.5 2.9 A4.1 4.1 0 1 0 9.1 5.6" stroke="#262626" stroke-width="1" stroke-linecap="round"/><path d="M8.9 1.2 V3.2 H6.9" stroke="#262626" stroke-width="0.9" stroke-linecap="round" stroke-linejoin="round"/></svg>
<div class="t" id="t71" style="top:7px;font-size:8.6px;line-height:12px;left:925.8px;color:#1f1f1f;">刷新</div>
<svg style="position:absolute;left:954px;top:8px;" width="11" height="10" viewBox="0 0 11 10" fill="none"><path d="M4.6 5.6 Q3.2 4.2 4.6 2.8 L6 1.4 Q7.4 0.2 8.8 1.4 Q10 2.8 8.8 4.2 L8 5" stroke="#262626" stroke-width="0.9" stroke-linecap="round"/><path d="M6 4.2 Q7.4 5.6 6 7 L4.6 8.4 Q3.2 9.6 1.8 8.4 Q0.6 7 1.8 5.6 L2.6 4.8" stroke="#262626" stroke-width="0.9" stroke-linecap="round"/><path d="M8.2 7.2 V9.8 M6.9 8.5 H9.5" stroke="#262626" stroke-width="0.8" stroke-linecap="round"/></svg>
<div class="t" id="t72" style="top:7px;font-size:8.6px;line-height:12px;left:968.8px;color:#1f1f1f;">联动过滤</div>
<div style="position:absolute;left:1018.1px;top:8.299999999999999px;width:1.8px;height:1.8px;background:#262626;border-radius:50%;"></div>
<div style="position:absolute;left:1018.1px;top:12.1px;width:1.8px;height:1.8px;background:#262626;border-radius:50%;"></div>
<div style="position:absolute;left:1018.1px;top:15.9px;width:1.8px;height:1.8px;background:#262626;border-radius:50%;"></div>
<div style="position:absolute;left:1034.4px;top:4.4px;width:36.2px;height:17px;box-sizing:border-box;border:1px solid #43609f;border-radius:1px;background:#8c8c8c;"></div>
<div class="t" id="t73" style="top:8px;font-size:7.6px;line-height:12px;left:952.5px;width:200px;text-align:center;color:#3a599e;">预 览</div>
<div style="position:absolute;left:278px;top:64.5px;width:524.2px;height:284px;background:#fff;border-radius:1.5px;box-shadow:0 3px 14px rgba(0,0,0,0.24);"></div>
<div class="t" id="t74" style="top:74px;font-size:10.8px;line-height:14px;left:290.2px;color:#262626;">条件格式</div>
<div style="position:absolute;left:278px;top:97px;width:524.2px;height:1px;background:#eeeeee;"></div>
<svg style="position:absolute;left:782.4px;top:77.9px;" width="7" height="7" viewBox="0 0 7 7" fill="none"><path d="M0.5 0.5 L6.3 6.3 M6.3 0.5 L0.5 6.3" stroke="#333" stroke-width="0.85" stroke-linecap="round"/></svg>
<div style="position:absolute;left:290px;top:108px;width:500px;height:15.8px;background:#f5f5f5;border-radius:1px;"></div>
<div class="t" id="t75" style="top:110px;font-size:7.1px;line-height:12px;left:296.2px;color:#333;">辅机</div>
<div class="t" id="t76" style="top:132px;font-size:7.3px;line-height:12px;left:290.2px;color:#8a8a8a;">条件规则</div>
<div class="t" id="t77" style="top:132px;font-size:7.3px;line-height:12px;left:406.2px;color:#8a8a8a;">依据字段</div>
<div style="position:absolute;left:290px;top:146.2px;width:103.6px;height:18.8px;box-sizing:border-box;border:0.9px solid #e1e1e1;border-radius:1.5px;background:#fff;"></div>
<div class="t" id="t78" style="top:150px;font-size:7.35px;line-height:12px;left:296.6px;color:#262626;">规则</div>
<svg style="position:absolute;left:379.3px;top:153.84999999999997px;" width="6.6" height="4.3" viewBox="0 0 6.6 4.3" fill="none"><path d="M0.3 0.5 L3.3 3.3 L6.3 0.5" stroke="#a6a6a6" stroke-width="0.7" stroke-linecap="round" stroke-linejoin="round"/></svg>
<div style="position:absolute;left:406px;top:146.2px;width:103.6px;height:18.8px;box-sizing:border-box;border:0.9px solid #e1e1e1;border-radius:1.5px;background:#fff;"></div>
<div class="t" id="t79" style="top:150px;font-size:7.35px;line-height:12px;left:412.6px;color:#262626;">当前字段</div>
<svg style="position:absolute;left:495.3px;top:153.84999999999997px;" width="6.6" height="4.3" viewBox="0 0 6.6 4.3" fill="none"><path d="M0.3 0.5 L3.3 3.3 L6.3 0.5" stroke="#a6a6a6" stroke-width="0.7" stroke-linecap="round" stroke-linejoin="round"/></svg>
<div style="position:absolute;left:290px;top:172px;width:499.8px;height:99px;box-sizing:border-box;border:0.9px solid #e2e2e2;background:#fff;"></div>
<div class="t" id="t80" style="top:180px;font-size:8.5px;line-height:12px;left:296.8px;color:#262626;">文字样式</div>
<div style="position:absolute;left:774.9px;top:181.8px;width:8.5px;height:8.3px;background:#2f6fe0;border-radius:0.8px;"></div>
<svg style="position:absolute;left:774.9px;top:181.8px;" width="8.5" height="8.3" viewBox="0 0 8.5 8.3" fill="none"><path d="M4.25 1.1 V7.2 M1.2 4.15 H7.3" stroke="#fff" stroke-width="1.15"/></svg>
<div style="position:absolute;left:296.8px;top:202px;width:486.6px;height:1px;background:#5a5a5a;"></div>
<div style="position:absolute;left:300px;top:224px;width:1px;height:1px;background:#d9d9d9;"></div>
<div style="position:absolute;left:300px;top:227px;width:1px;height:1px;background:#d9d9d9;"></div>
<div style="position:absolute;left:300px;top:229px;width:1px;height:1px;background:#d9d9d9;"></div>
<div style="position:absolute;left:300px;top:231px;width:1px;height:1px;background:#d9d9d9;"></div>
<div style="position:absolute;left:300px;top:233px;width:1px;height:1px;background:#d9d9d9;"></div>
<div style="position:absolute;left:302px;top:224px;width:1px;height:1px;background:#d9d9d9;"></div>
<div style="position:absolute;left:302px;top:227px;width:1px;height:1px;background:#d9d9d9;"></div>
<div style="position:absolute;left:302px;top:229px;width:1px;height:1px;background:#d9d9d9;"></div>
<div style="position:absolute;left:302px;top:231px;width:1px;height:1px;background:#d9d9d9;"></div>
<div style="position:absolute;left:302px;top:233px;width:1px;height:1px;background:#d9d9d9;"></div>
<div style="position:absolute;left:311.4px;top:219px;width:54.2px;height:20px;box-sizing:border-box;border:0.9px solid #e1e1e1;border-radius:1.5px;background:#fff;"></div>
<div class="t" id="t81" style="top:224px;font-size:7.4px;line-height:12px;left:318.2px;color:#262626;">&gt;</div>
<svg style="position:absolute;left:351.29999999999995px;top:227.24999999999997px;" width="6.6" height="4.3" viewBox="0 0 6.6 4.3" fill="none"><path d="M0.3 0.5 L3.3 3.3 L6.3 0.5" stroke="#a6a6a6" stroke-width="0.7" stroke-linecap="round" stroke-linejoin="round"/></svg>
<div style="position:absolute;left:372.4px;top:219px;width:60.6px;height:20px;box-sizing:border-box;border:0.9px solid #7b9fec;border-radius:1.5px;background:#fff;box-shadow:0 0 0 1.2px rgba(64,128,255,0.14);"></div>
<div class="t" id="t82" style="top:223px;font-size:7px;line-height:12px;left:379.2px;color:#777;">图内度量</div>
<svg style="position:absolute;left:418.7px;top:227.24999999999997px;" width="6.6" height="4.3" viewBox="0 0 6.6 4.3" fill="none"><path d="M0.3 0.5 L3.3 3.3 L6.3 0.5" stroke="#a6a6a6" stroke-width="0.7" stroke-linecap="round" stroke-linejoin="round"/></svg>
<div style="position:absolute;left:439.4px;top:219px;width:79px;height:20px;box-sizing:border-box;border:0.9px solid #e1e1e1;border-radius:1.5px;background:#fff;"></div>
<div class="t" id="t83" style="top:224px;font-size:7.2px;line-height:12px;left:446.0px;color:#262626;">机器人</div>
<svg style="position:absolute;left:504.09999999999997px;top:227.24999999999997px;" width="6.6" height="4.3" viewBox="0 0 6.6 4.3" fill="none"><path d="M0.3 0.5 L3.3 3.3 L6.3 0.5" stroke="#a6a6a6" stroke-width="0.7" stroke-linecap="round" stroke-linejoin="round"/></svg>
<div class="t" id="t84" style="top:223px;font-size:6.8px;line-height:12px;left:532px;color:#c4c4c4;">显示为</div>
<div style="position:absolute;left:559.6px;top:219px;width:48.7px;height:20px;box-sizing:border-box;border:0.9px solid #e1e1e1;border-radius:1.5px;background:#fff;"></div>
<div class="t" id="t85" style="top:223px;font-size:7.7px;line-height:12px;left:566.6px;color:#262626;">12px</div>
<svg style="position:absolute;left:594.0000000000001px;top:227.24999999999997px;" width="6.6" height="4.3" viewBox="0 0 6.6 4.3" fill="none"><path d="M0.3 0.5 L3.3 3.3 L6.3 0.5" stroke="#a6a6a6" stroke-width="0.7" stroke-linecap="round" stroke-linejoin="round"/></svg>
<div class="t" id="t86" style="top:220px;font-size:11.6px;line-height:12px;left:521.4px;width:200px;text-align:center;color:#666;">A</div>
<div style="position:absolute;left:615.8px;top:234.3px;width:11.2px;height:3px;background:#3d73e0;border-radius:0.4px;"></div>
<div style="position:absolute;left:634px;top:222px;width:13.4px;height:13.4px;box-sizing:border-box;border:0.9px solid #dedede;border-radius:1.5px;background:#fff;"></div>
<div class="t" id="t87" style="top:223px;font-size:11.4px;line-height:12px;left:540.8px;width:200px;text-align:center;color:#1a1a1a;font-weight:700;">B</div>
<svg style="position:absolute;left:654.2px;top:225.2px;" width="7.2" height="8" viewBox="0 0 8 9" fill="none"><path d="M0.6 1.9 H7.4 M2.8 1.8 V0.8 H5.2 V1.8" stroke="#a2a2a2" stroke-width="0.7" stroke-linecap="round" stroke-linejoin="round"/><path d="M1.4 2 V7.4 Q1.4 8.2 2.2 8.2 H5.8 Q6.6 8.2 6.6 7.4 V2" stroke="#a2a2a2" stroke-width="0.7"/><path d="M3.2 3.8 V6.4 M4.8 3.8 V6.4" stroke="#a2a2a2" stroke-width="0.6" stroke-linecap="round"/></svg>
<div class="t" id="t88" style="top:284px;font-size:7.3px;line-height:12px;left:290.2px;color:#8a8a8a;">应用范围</div>
<div style="position:absolute;left:290px;top:297.8px;width:103.6px;height:18.8px;box-sizing:border-box;border:0.9px solid #e1e1e1;border-radius:1.5px;background:#fff;"></div>
<div class="t" id="t89" style="top:302px;font-size:7.35px;line-height:12px;left:296.6px;color:#262626;">仅字段</div>
<svg style="position:absolute;left:379.3px;top:305.45px;" width="6.6" height="4.3" viewBox="0 0 6.6 4.3" fill="none"><path d="M0.3 0.5 L3.3 3.3 L6.3 0.5" stroke="#a6a6a6" stroke-width="0.7" stroke-linecap="round" stroke-linejoin="round"/></svg>
<div style="position:absolute;left:372.2px;top:240.2px;width:61px;height:78.4px;background:#fff;border-radius:1.5px;box-shadow:0 1px 6px rgba(0,0,0,0.16),0 0 1px rgba(0,0,0,0.10);"></div>
<div style="position:absolute;left:372.2px;top:292.2px;width:61px;height:23.4px;background:#e9f0fe;"></div>
<div class="t" id="t90" style="top:250px;font-size:8.3px;line-height:12px;left:380.6px;color:#2e2e2e;">固定值</div>
<div class="t" id="t91" style="top:274px;font-size:8.3px;line-height:12px;left:380.6px;color:#2e2e2e;">计算值</div>
<div class="t" id="t92" style="top:299px;font-size:8.3px;line-height:12px;left:380.6px;color:#2f6fe6;font-weight:500;">图内度量</div>
<div style="position:absolute;left:707.3px;top:317.2px;width:38.6px;height:19.4px;box-sizing:border-box;border:0.9px solid #dedede;border-radius:1.5px;background:#fff;"></div>
<div class="t" id="t93" style="top:321px;font-size:8.3px;line-height:12px;left:626.6px;width:200px;text-align:center;color:#2e2e2e;">取 消</div>
<div style="position:absolute;left:751px;top:317.2px;width:38.9px;height:19.4px;background:#3b78f0;border-radius:1.5px;"></div>
<div class="t" id="t94" style="top:322px;font-size:8.3px;line-height:12px;left:670.5px;width:200px;text-align:center;color:#fff;">确 定</div>
<svg style="position:absolute;left:9px;top:533px;" width="40" height="26" viewBox="0 0 40 26" fill="none"><path d="M5.6 3.1 V23.2 H2.3 V8 L0.9 9.2 L-0.2 6.9 L3.3 3.1 Z" fill="rgba(214,214,214,0.9)"/><path d="M11.82 7.67 A7.35 7.35 0 1 0 20.71 16.64" stroke="rgba(214,214,214,0.9)" stroke-width="3.3" stroke-linecap="butt"/><rect x="15.1" y="0.2" width="2.1" height="11.6" fill="rgba(214,214,214,0.9)"/><circle cx="22.4" cy="6.1" r="4.2" stroke="rgba(214,214,214,0.9)" stroke-width="2"/><circle cx="32.4" cy="6.1" r="4.6" stroke="rgba(214,214,214,0.9)" stroke-width="2.2"/></svg>
<div class="t" id="t95" style="top:534px;font-size:21.4px;line-height:26px;left:52.8px;color:rgba(214,214,214,0.9);font-weight:700;letter-spacing:0.3px;text-shadow:0 0 1.5px rgba(90,90,90,0.5);">大数跨境</div>
</div>
</body>
</html>
